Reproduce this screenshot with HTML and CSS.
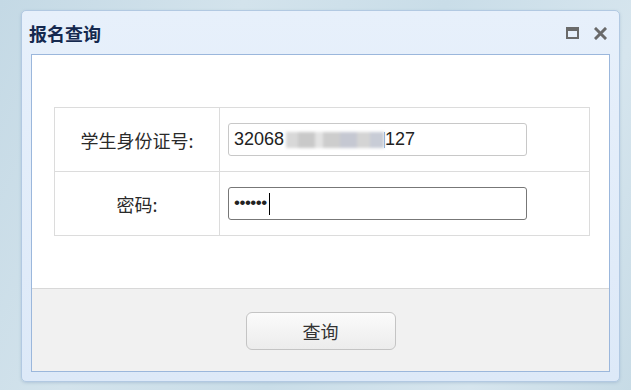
FILE: index.html
```html
<!DOCTYPE html>
<html lang="zh-CN">
<head>
<meta charset="utf-8">
<title>报名查询</title>
<link rel="stylesheet" href="styles.css">
</head>
<body>
<div class="win">
  <div class="win-head">
    <span class="win-title">报名查询</span>
    <div class="win-tools">
      <svg class="tool" width="13" height="12" viewBox="0 0 13 12"><rect x="1" y="1" width="11" height="10" fill="none" stroke="#6a6a6a" stroke-width="2"/><rect x="1" y="1" width="11" height="3" fill="#6a6a6a"/></svg>
      <svg class="tool" width="13" height="13" viewBox="0 0 13 13"><path d="M2 2 L11 11 M11 2 L2 11" stroke="#6a6a6a" stroke-width="3" stroke-linecap="square"/></svg>
    </div>
  </div>
  <div class="win-body">
    <div class="form-area">
      <table class="form-table">
        <tr>
          <td class="lbl">学生身份证号:</td>
          <td class="fld"><div class="input"><span>32068</span><span class="blur"></span><span class="caret-blue"></span><span>127</span></div></td>
        </tr>
        <tr>
          <td class="lbl">密码:</td>
          <td class="fld"><div class="input focus"><span class="dots">••••••</span><span class="caret"></span></div></td>
        </tr>
      </table>
    </div>
    <div class="footer">
      <button class="btn">查询</button>
    </div>
  </div>
</div>
</body>
</html>
```
FILE: styles.css
```css
html, body {
  margin: 0;
  padding: 0;
  height: 100%;
}
body {
  background: linear-gradient(115deg, #c4d9e5 0%, #d3e3ec 30%, #c9dde8 55%, #d6e5ee 80%, #c7dbe6 100%);
  padding: 10px 0 0 21px;
  box-sizing: border-box;
  font-family: "Noto Sans CJK SC", "Liberation Sans", sans-serif;
}
.win {
  width: 599px;
  height: 372px;
  box-sizing: border-box;
  border: 1px solid #b2c9e2;
  border-radius: 5px;
  background: linear-gradient(#e7f0fb, #dde9f8);
  padding: 0 9px 9px 9px;
  display: flex;
  flex-direction: column;
  box-shadow: 0 1px 3px rgba(120, 150, 180, 0.35);
}
.win-head {
  height: 43px;
  display: flex;
  align-items: center;
  justify-content: space-between;
}
.win-title {
  font-size: 18px;
  font-weight: bold;
  color: #15294f;
  margin-left: -2px;
  margin-top: 1px;
}
.win-tools {
  display: flex;
  align-items: center;
  gap: 15px;
  margin-right: 3px;
  margin-top: 1px;
}
.tool { display: block; }
.win-body {
  flex: 1;
  border: 1px solid #9bb7dc;
  background: #fff;
  display: flex;
  flex-direction: column;
}
.form-area {
  height: 233px;
  padding: 52px 19px 0 22px;
  box-sizing: border-box;
}
.form-table {
  width: 100%;
  border-collapse: collapse;
}
.form-table td {
  border: 1px solid #dcdcdc;
  height: 63px;
  padding: 0;
}
.lbl {
  width: 164px;
  text-align: center;
  font-size: 18px;
  color: #2a2a2a;
}
.fld {
  padding-left: 8px !important;
}
.input {
  width: 299px;
  height: 33px;
  box-sizing: border-box;
  border: 1px solid #c8c8c8;
  border-radius: 3px;
  display: flex;
  align-items: center;
  padding-left: 5px;
  font-family: "Liberation Sans", sans-serif;
  font-size: 18px;
  color: #222;
  background: #fff;
}
.input.focus {
  border-color: #777;
}
.blur {
  display: inline-block;
  width: 98px;
  height: 16px;
  background: linear-gradient(90deg, #d8d8d8 0 12%, #c9c9c9 12% 30%, #e3e3e3 30% 38%, #cdcdcd 38% 55%, #c5c8d2 55% 72%, #d4d4d4 72% 86%, #c8ccd6 86% 100%);
  filter: blur(1.5px);
  margin-left: 2px;
}
.caret-blue {
  display: inline-block;
  width: 1px;
  height: 16px;
  background: #7aa4d6;
}
.dots {
  font-size: 17px;
  letter-spacing: -0.5px;
  margin-top: -1px;
}
.caret {
  display: inline-block;
  width: 1px;
  height: 22px;
  background: #000;
  margin-left: 2px;
}
.footer {
  flex: 1;
  background: #f1f1f1;
  border-top: 1px solid #d8d8d8;
  display: flex;
  justify-content: center;
  padding-top: 23px;
  box-sizing: border-box;
}
.btn {
  width: 150px;
  height: 38px;
  border: 1px solid #c4c4c4;
  border-radius: 6px;
  background: linear-gradient(#fbfbfb, #ececec);
  font-family: "Noto Sans CJK SC", sans-serif;
  font-size: 18px;
  color: #333;
  padding: 0;
  margin-left: 0;
}
```
